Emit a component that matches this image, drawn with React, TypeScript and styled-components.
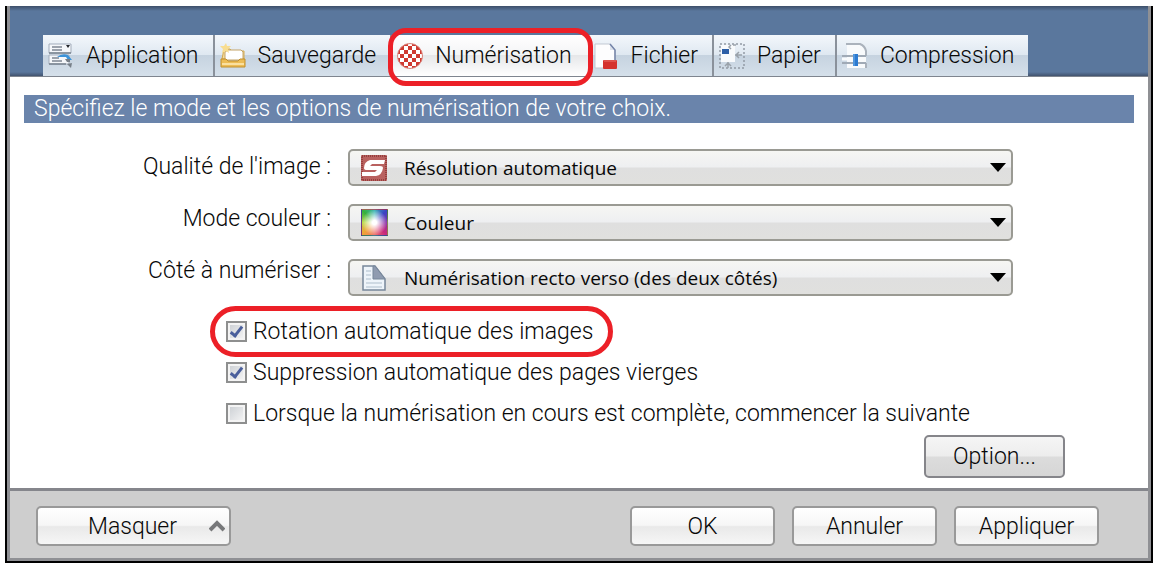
import React from 'react';
import styled, { createGlobalStyle, css } from 'styled-components';

const Global = createGlobalStyle`
  *, *::before, *::after { box-sizing: border-box; }
  body {
    margin: 0;
    background: #fff;
    color: #080808;
    font-family: Roboto, "Liberation Sans", sans-serif;
    font-size: 23px;
    font-weight: 300;
  }
  button, input, select { font: inherit; color: inherit; }
`;

const Window = styled.main`
  margin: 6px 4px 3px 5px;
  border: 2px solid #000;
  border-top: 0;
`;

const Frame = styled.div`
  border: 3px solid #8f9094;
  border-top: 0;
  background: #fff;
`;

const Header = styled.header`
  padding: 29px 0 0 33px;
  border-bottom: 1px solid #7f858f;
  background: linear-gradient(#3d4f69, #5a779d 5px, #5a779d 66px, #42536e 70px);
`;

const Tabs = styled.div`
  display: flex;
`;

const Tab = styled.button<{ $active?: boolean; $last?: boolean }>`
  position: relative;
  display: flex;
  align-items: center;
  gap: 12px;
  height: 41px;
  padding: 0 14px 0 5px;
  border: 0;
  border-right: ${(p) => (p.$last ? 0 : 2)}px solid #8a919b;
  white-space: nowrap;
  background: linear-gradient(#f3f7fb, #dfe8f1 48%, #c6d3e0 50%, #d5e0ea);
  ${(p) =>
    p.$active &&
    css`
      border-color: transparent;
      background: linear-gradient(#fff, #f4f5f6 48%, #e6e7e9 50%, #fff);
    `}
`;

const Ring = styled.span<{ $round?: boolean }>`
  position: absolute;
  z-index: 1;
  inset: ${(p) => (p.$round ? '-5px -20px -5px -16px' : '-7px -7px -10px -4px')};
  border: 5px solid #ec2027;
  border-radius: ${(p) => (p.$round ? 26 : 18)}px;
  pointer-events: none;
`;

const Icon = styled.svg`
  flex: none;
  width: 26px;
  height: 26px;
`;

const Banner = styled.p`
  margin: 18px 14px 0;
  padding: 0 10px;
  background: #6a84ab;
  color: #fff;
  line-height: 28px;
`;

const Fields = styled.section`
  display: flex;
  gap: 17px;
  margin-top: 17px;
  padding-right: 135px;
`;

const Labels = styled.div`
  display: flex;
  flex-direction: column;
  width: 321px;
  padding-top: 1px;
  text-align: right;
  line-height: 52px;
`;

const Selects = styled.div`
  display: flex;
  flex: 1;
  flex-direction: column;
  gap: 18px;
  padding-top: 9px;
`;

const SelectBox = styled.div`
  position: relative;
`;

const Select = styled.select`
  display: block;
  width: 100%;
  height: 37px;
  padding: 0 40px 0 54px;
  appearance: none;
  border: 2px solid #9a9a93;
  border-radius: 5px;
  background: linear-gradient(#f6f6f3, #eeeff1 48%, #dfdfdf 52%, #e0e0de);
  font-family: "Open Sans", "Noto Sans", sans-serif;
  font-size: 19px;
  font-weight: 400;
`;

const SelectIcon = styled(Icon)`
  position: absolute;
  top: 6px;
  left: 13px;
`;

const Swatch = styled.div`
  position: absolute;
  top: 5px;
  left: 13px;
  width: 27px;
  height: 27px;
  border: 1px solid rgba(70, 60, 100, 0.5);
  background: radial-gradient(circle at 50% 50%, #fff 12%, rgba(255, 255, 255, 0) 72%),
    conic-gradient(from 45deg, #3b43c4, #8a2fa8 45deg, #c8287c 90deg, #ee7068 135deg, #f0a238 180deg, #b8d840 225deg, #36b03c 270deg, #38b4b4 315deg, #3b43c4);
`;

const Arrow = styled.svg`
  position: absolute;
  top: 14px;
  right: 7px;
  width: 16px;
  height: 10px;
  pointer-events: none;
`;

const Options = styled.section`
  display: flex;
  flex-direction: column;
  align-items: flex-start;
  margin: 14px 0 0 216px;
`;

const Check = styled.label`
  position: relative;
  display: flex;
  align-items: center;
  gap: 6px;
  line-height: 41px;
`;

const CheckBox = styled.input`
  display: grid;
  place-items: center;
  width: 21px;
  height: 21px;
  margin: 0;
  appearance: none;
  border: 2px solid #8e8f8f;
  background: linear-gradient(135deg, #c9cdd2, #f7f7f7);
  box-shadow: inset 0 0 0 2px #f4f4f4;
  &:checked::after {
    content: '';
    width: 7px;
    height: 13px;
    margin-top: -3px;
    border: solid #4a5f9c;
    border-width: 0 3px 3px 0;
    transform: rotate(38deg);
  }
`;

const Button = styled.button<{ $tall?: boolean; $wide?: boolean }>`
  display: flex;
  align-items: center;
  justify-content: center;
  width: ${(p) => (p.$wide ? 195 : p.$tall ? 141 : 145)}px;
  height: ${(p) => (p.$tall ? 43 : 40)}px;
  padding: 0;
  border: 2px solid ${(p) => (p.$tall ? '#85858a' : '#999')};
  border-radius: 5px;
  background: ${(p) =>
    p.$tall
      ? 'linear-gradient(#f5f5f5, #ededed 48%, #dcdcdc 52%, #d6d6d6)'
      : 'linear-gradient(#fff, #f6f6f6 48%, #e9e9e9 52%, #f6f6f6)'};
`;

const Actions = styled.div`
  display: flex;
  justify-content: flex-end;
  padding: 1px 83px 10px 0;
`;

const Footer = styled.footer`
  display: flex;
  gap: 17px;
  padding: 15px 49px 12px 26px;
  border-top: 3px solid #85868c;
  background: #cecece;
`;

const Spacer = styled.div`
  flex: 1;
`;

const Chevron = styled.svg`
  width: 16px;
  height: 12px;
  margin: 0 4px 0 auto;
`;

const MasquerText = styled.span`
  margin-left: 50px;
`;

const AppIcon = () => (
  <Icon viewBox="0 0 26 26">
    <path d="M1 1h22v9H1zM1 12h20v9H1z" fill="#f5f7fa" stroke="#a3adbb" />
    <path d="M1 10h22M1 21h17" stroke="#77828f" strokeWidth="1.5" />
    <path d="M4 4h10M4 7h10M4 15h7M4 18h10" stroke="#7d8793" strokeWidth="1.5" />
    <path d="M18 2h4l-2 3z" fill="#23262b" />
    <path d="M9 14q5-4 11-2l4 5h-4l-2-3z" fill="#3c93d8" />
    <path d="M17 16h5v3h-3zM19 21l5-1-1 5z" fill="#777f88" />
  </Icon>
);

const SaveIcon = () => (
  <Icon viewBox="0 0 26 26">
    <path d="M2 16L4 6h6l2 2h12v8z" fill="#f5dc9c" stroke="#d3a94e" />
    <path d="M5 17V9l3-2h13l2 2v8z" fill="#fff" stroke="#c4a468" />
    <path d="M1 16h5l2 2h10l2-2h5v8H1z" fill="#edbd56" stroke="#c08f2c" />
    <path d="M2 21h22" stroke="#fae0a0" strokeWidth="2" />
    <path d="M6 0l1 3 4 0-3 3 1 4-3-2-4 2 1-4-3-3h4z" fill="#f8dd90" />
  </Icon>
);

const ScanIcon = () => (
  <Icon viewBox="0 0 26 26">
    <defs>
      <pattern id="checker" width="8" height="8" patternUnits="userSpaceOnUse" patternTransform="translate(3 3)">
        <rect width="8" height="8" fill="#fff" />
        <path d="M0 0h4v4H0zM4 4h4v4H4z" fill="#cf3a31" />
      </pattern>
    </defs>
    <circle cx="13" cy="13" r="12.5" fill="url(#checker)" stroke="#d98078" />
  </Icon>
);

const FileIcon = () => (
  <Icon viewBox="0 0 26 26">
    <path d="M2 1h15l5 6v18H2z" fill="#fdfdfe" stroke="#c3c9d2" />
    <path d="M17 1v6h5z" fill="#dce2ec" />
    <path d="M17 1l5 6v10" fill="none" stroke="#7484a8" strokeWidth="1.5" />
    <rect x="10" y="17" width="14" height="9" rx="1" fill="#d5322d" />
    <path d="M11 18h12" stroke="#e8706a" />
  </Icon>
);

const PaperIcon = () => (
  <Icon viewBox="0 0 26 26">
    <path d="M1 1h24v24H1z" fill="none" stroke="#929ba5" strokeDasharray="2 2" strokeWidth="1.5" />
    <path d="M2 2h14v17H2z" fill="#f8fafc" />
    <rect x="3" y="6" width="7" height="5" fill="#2c5ea6" />
    <path d="M12 2l-2 2 2 2M14 2h3M16 12h7M20 9l-3 3 3 3M9 19v6M6 23l3-3 3 3" fill="none" stroke="#9aa2aa" strokeWidth="1.5" />
  </Icon>
);

const CompressIcon = () => (
  <Icon viewBox="0 0 26 26">
    <path d="M5 1h13l6 7v17H5z" fill="#f8fafc" />
    <path d="M4 1h14q5 2 6 7v5M24 20v5" fill="none" stroke="#aab2bc" strokeWidth="2" />
    <path d="M0 13h24M0 20h24" stroke="#a0aab6" strokeWidth="2" />
    <path d="M0 16h24" stroke="#f8fafc" strokeWidth="3" />
    <rect x="11" y="11" width="5" height="12" fill="#2c7ad0" />
    <path d="M12 11v12" stroke="#75b2ec" />
  </Icon>
);

const QualityIcon = () => (
  <SelectIcon viewBox="0 0 26 26">
    <rect width="26" height="26" rx="1" fill="#b9615f" />
    <rect x="1" y="1" width="24" height="24" fill="none" stroke="#94403e" strokeWidth="2" strokeDasharray="1 1" />
    <path d="M24 5H9Q3 7 3 13q0 2 3 2h10l-2 2H1v4h14q6-1 7-8 0-2-3-2H9l2-2h12z" fill="#fff" />
  </SelectIcon>
);

const ColorIcon = () => <Swatch />;

const PageIcon = () => (
  <SelectIcon viewBox="0 0 26 26">
    <path d="M2 1h12l10 13v11H2z" fill="#eef4fa" stroke="#77879a" strokeWidth="1.5" />
    <path d="M12 1h2l10 13H12z" fill="#8f9bb0" stroke="#77879a" />
    <path d="M5 6h5M5 10h5M5 14h5M5 18h16M5 22h16" stroke="#c3d0dc" strokeWidth="1.5" />
  </SelectIcon>
);

const tabs = [
  { label: 'Application', Glyph: AppIcon },
  { label: 'Sauvegarde', Glyph: SaveIcon },
  { label: 'Numérisation', Glyph: ScanIcon },
  { label: 'Fichier', Glyph: FileIcon },
  { label: 'Papier', Glyph: PaperIcon },
  { label: 'Compression', Glyph: CompressIcon },
];

const fields = [
  { id: 'quality', label: "Qualité de l'image :", value: 'Résolution automatique', Glyph: QualityIcon },
  { id: 'color', label: 'Mode couleur :', value: 'Couleur', Glyph: ColorIcon },
  { id: 'side', label: 'Côté à numériser :', value: 'Numérisation recto verso (des deux côtés)', Glyph: PageIcon },
];

const checks = [
  { label: 'Rotation automatique des images', on: true },
  { label: 'Suppression automatique des pages vierges', on: true },
  { label: 'Lorsque la numérisation en cours est complète, commencer la suivante', on: false },
];

export default function App() {
  return (
    <>
      <Global />
      <Window>
        <Frame>
          <Header>
            <Tabs role="tablist">
              {tabs.map(({ label, Glyph }, i) => (
                <Tab key={label} role="tab" aria-selected={i === 2} $active={i === 2} $last={i === 5}>
                  <Glyph />
                  {label}
                  {i === 2 && <Ring />}
                </Tab>
              ))}
            </Tabs>
          </Header>
          <Banner>Spécifiez le mode et les options de numérisation de votre choix.</Banner>
          <Fields>
            <Labels>
              {fields.map((f) => (
                <label key={f.id} htmlFor={f.id}>{f.label}</label>
              ))}
            </Labels>
            <Selects>
              {fields.map(({ id, value, Glyph }) => (
                <SelectBox key={id}>
                  <Select id={id}>
                    <option>{value}</option>
                  </Select>
                  <Glyph />
                  <Arrow viewBox="0 0 16 10">
                    <path d="M0 0h16L8 9z" />
                  </Arrow>
                </SelectBox>
              ))}
            </Selects>
          </Fields>
          <Options>
            {checks.map((c, i) => (
              <Check key={c.label}>
                <CheckBox type="checkbox" defaultChecked={c.on} />
                {c.label}
                {i === 0 && <Ring $round />}
              </Check>
            ))}
          </Options>
          <Actions>
            <Button $tall>Option...</Button>
          </Actions>
          <Footer>
            <Button $wide>
              <MasquerText>Masquer</MasquerText>
              <Chevron viewBox="0 0 16 12">
                <path d="M1 10l7-7 7 7" fill="none" stroke="#77787a" strokeWidth="4" />
              </Chevron>
            </Button>
            <Spacer />
            <Button>OK</Button>
            <Button>Annuler</Button>
            <Button>Appliquer</Button>
          </Footer>
        </Frame>
      </Window>
    </>
  );
}
